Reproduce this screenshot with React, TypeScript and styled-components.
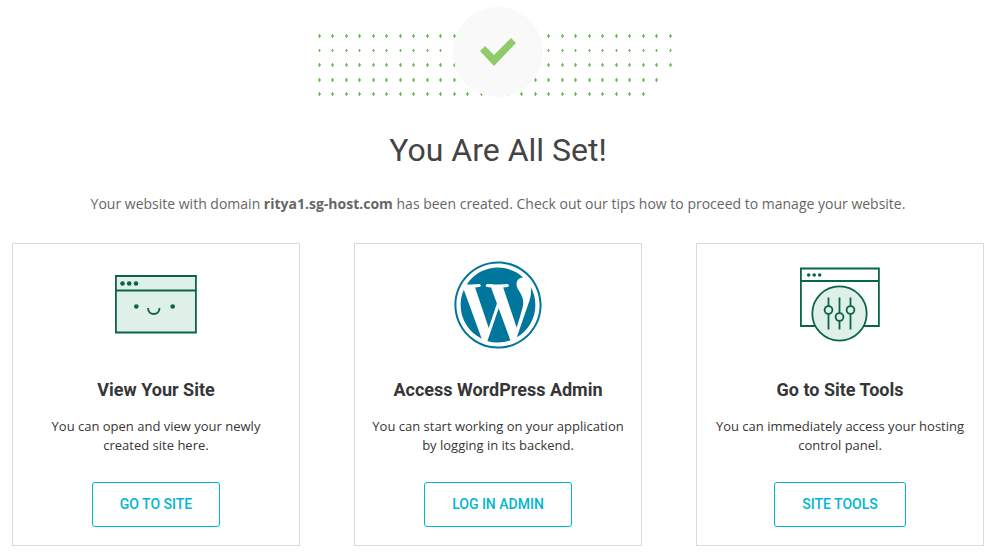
import type { ReactNode } from "react";
import styled, { createGlobalStyle } from "styled-components";
import { FaWordpress } from "react-icons/fa";

const GlobalStyle = createGlobalStyle`
  *, *::before, *::after { box-sizing: border-box; }
  body {
    margin: 0;
    background: #fff;
    color: #363636;
    font-family: "Open Sans", sans-serif;
  }
`;

const Page = styled.main`
  display: flex;
  flex-direction: column;
  align-items: center;
  padding: 7px 16px 14px 12px;
`;

const Banner = styled.svg`
  display: block;
  width: 360px;
  height: 90px;
`;

const Heading = styled.h1`
  margin: 31px 0 0;
  color: #444;
  font: 400 32px/44px Roboto, sans-serif;
  text-align: center;
`;

const Lead = styled.p`
  margin: 21px 0 0;
  color: #666;
  font-size: 14px;
  line-height: 22px;
  text-align: center;
`;

const Cards = styled.section`
  display: grid;
  grid-template-columns: repeat(3, minmax(0, 1fr));
  gap: 54px;
  width: 100%;
  margin-top: 28px;
`;

const Card = styled.article`
  display: flex;
  flex-direction: column;
  align-items: center;
  padding: 18px 14px;
  border: 1px solid #dadada;
  text-align: center;
`;

const Picture = styled.div`
  display: flex;
  align-items: center;
  justify-content: center;
  height: 86px;

  svg { display: block; }
`;

const CardTitle = styled.h2`
  margin: 29px 0 0;
  font: 700 18px/26px Roboto, sans-serif;
`;

const CardText = styled.p`
  margin: 14px 0 0;
  font-size: 13px;
  line-height: 19px;
`;

const CardButton = styled.button`
  height: 45px;
  margin-top: 27px;
  padding: 0 27px 2px;
  border: 1px solid #00b6d1;
  border-radius: 3px;
  background: #fff;
  color: #00b6d1;
  font: 500 14px/20px Roboto, sans-serif;
  text-transform: uppercase;
  cursor: pointer;
`;

const GREEN = "#0a6447";
const MINT = "#dff0e8";

const dotRows = [
  { y: 28, count: 27, small: false },
  { y: 43, count: 27, small: true },
  { y: 57, count: 27, small: false },
  { y: 72, count: 26, small: false },
  { y: 86, count: 25, small: false },
];

function SuccessBanner() {
  return (
    <Banner viewBox="0 0 360 90" role="img" aria-label="Success">
      {dotRows.map(({ y, count, small }) =>
        Array.from({ length: count }, (_, col) => {
          const x = Math.floor(1 + col * 13.5);
          return (
            <g key={`${y}-${col}`} fill="#6cbb5a">
              <path d={`M${x} ${y - 1}h1v${small ? 3 : 4}h-1z`} />
              <path d={`M${x - 1} ${y}h3v${small ? 1 : 2}h-3z`} opacity="0.7" />
            </g>
          );
        }),
      )}
      <circle cx="180" cy="45" r="45" fill="#f9f9f9" />
      <path d="M162 44l5-5 9 9 17-17 5 5-22 23z" fill="#8fcb68" />
    </Banner>
  );
}

function SiteIcon() {
  return (
    <svg width="82" height="86" viewBox="1 0.500 82 86" fill="none" stroke={GREEN} strokeWidth="1.8">
      <path d="M1.900 14.500h80v56.500h-80z" fill={MINT} />
      <path d="M1.900 29h80" />
      <g fill={GREEN} stroke="none">
        <circle cx="8.500" cy="22" r="2.300" />
        <circle cx="15.200" cy="22" r="2.300" />
        <circle cx="22" cy="22" r="2.300" />
        <circle cx="22.300" cy="45" r="2.300" />
        <circle cx="58.700" cy="45" r="2.300" />
      </g>
      <path d="M34 46.500c0 8 11.500 8 11.500 0" />
    </svg>
  );
}

function ToolsIcon() {
  return (
    <svg width="80" height="86" viewBox="0.800 0.500 80 86" fill="none" stroke={GREEN} strokeWidth="1.8">
      <path d="M1.700 7h78v57.500h-78zM1.700 19.500h78" />
      <g fill={GREEN} stroke="none">
        <circle cx="9.500" cy="13.500" r="1.800" />
        <circle cx="15" cy="13.500" r="1.800" />
        <circle cx="20.500" cy="13.500" r="1.800" />
      </g>
      <circle cx="40.300" cy="52" r="27.200" fill={MINT} />
      <path d="M29.300 36v32M40.300 36v32M51.300 36v32" />
      <g fill={MINT}>
        <circle cx="29.300" cy="48.500" r="3.900" />
        <circle cx="40.300" cy="55.500" r="3.900" />
        <circle cx="51.300" cy="48.500" r="3.900" />
      </g>
    </svg>
  );
}

const cards: { title: string; text: string; action: string; icon: ReactNode }[] = [
  {
    title: "View Your Site",
    text: "You can open and view your newly created site here.",
    action: "Go to site",
    icon: <SiteIcon />,
  },
  {
    title: "Access WordPress Admin",
    text: "You can start working on your application by logging in its backend.",
    action: "Log in admin",
    icon: <FaWordpress size={90} color="#00769d" />,
  },
  {
    title: "Go to Site Tools",
    text: "You can immediately access your hosting control panel.",
    action: "Site tools",
    icon: <ToolsIcon />,
  },
];

export default function App() {
  return (
    <>
      <GlobalStyle />
      <Page>
        <SuccessBanner />
        <Heading>You Are All Set!</Heading>
        <Lead>
          Your website with domain <strong>ritya1.sg-host.com</strong> has been created. Check out
          our tips how to proceed to manage your website.
        </Lead>
        <Cards>
          {cards.map(({ title, text, action, icon }) => (
            <Card key={title}>
              <Picture>{icon}</Picture>
              <CardTitle>{title}</CardTitle>
              <CardText>{text}</CardText>
              <CardButton type="button">{action}</CardButton>
            </Card>
          ))}
        </Cards>
      </Page>
    </>
  );
}
